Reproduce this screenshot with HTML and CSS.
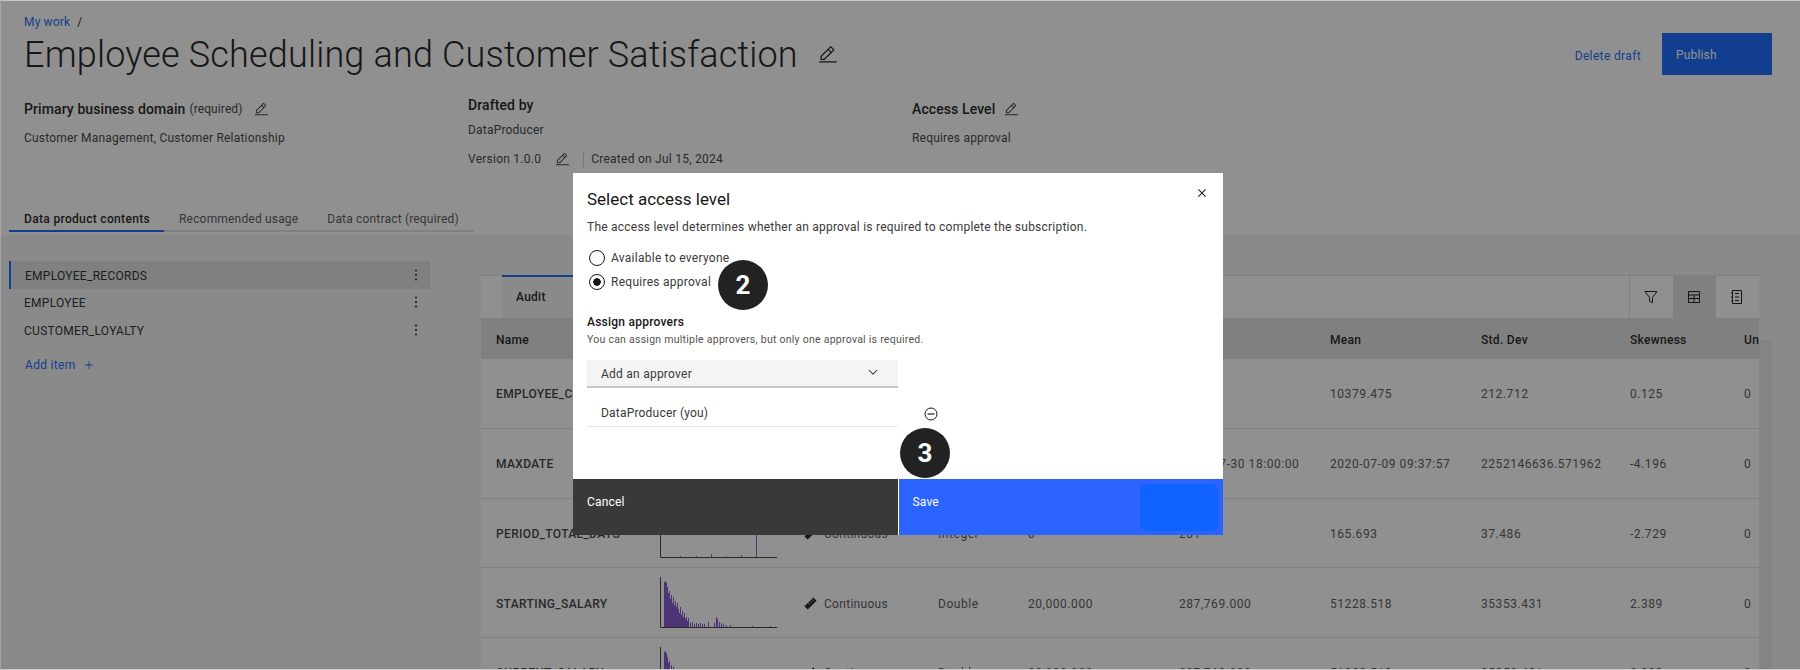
FILE: index.html
```html
<!DOCTYPE html>
<html lang="en">
<head>
    <meta charset="UTF-8">
    <meta name="viewport" content="width=device-width, initial-scale=1.0">
    <title>Employee Scheduling and Customer Satisfaction</title>
    <link rel="stylesheet" href="styles.css">
</head>
<body>
    <svg class="defs" width="0" height="0">
        <symbol id="i-edit" viewBox="0 0 32 32"><path d="M2 26h28v2H2zM25.4 9c.8-.8.8-2 0-2.8l-3.6-3.6c-.8-.8-2-.8-2.8 0l-15 15V24h6.4l15-15zm-5-5L24 7.6l-3 3L17.4 7l3-3zM6 22v-3.6l10-10 3.6 3.6-10 10H6z"/></symbol>
        <symbol id="i-more" viewBox="0 0 16 16"><circle cx="8" cy="3.5" r="1"/><circle cx="8" cy="8" r="1"/><circle cx="8" cy="12.5" r="1"/></symbol>
        <symbol id="i-ruler" viewBox="0 0 14 14"><path d="M.5 10 10 .5 13.5 4 4 13.5z"/><path d="M4.5 6.5l1.5 1.5M6.5 4.5 8 6M8.5 2.5 10 4" stroke="#fff" stroke-width="1"/></symbol>
        <symbol id="i-bars" viewBox="0 0 117 51"><path d="M4.5 50V5M5.5 50V4M6.5 50V6M7.5 50V10M8.5 50V16M9.5 50V14M10.5 50V22M11.5 50V18M12.5 50V26M13.5 50V20M14.5 50V28M15.5 50V24M16.5 50V30M17.5 50V26M18.5 50V32M19.5 50V36M20.5 50V30M21.5 50V38M22.5 50V34M23.5 50V40M24.5 50V36M25.5 50V42M26.5 50V40M27.5 50V44M28.5 50V41M30.5 50V46M32.5 50V45M34.5 50V47M36.5 50V46M38.5 50V47M40.5 50V46M42.5 50V47M44.5 50V47M48.5 50V45M54.5 50V46M56.5 50V40M57.5 50V42M59.5 50V45M61.5 50V46M63.5 50V47M66.5 50V48M70.5 50V48M92.5 50V49M110.5 50V49"/></symbol>
    </svg>

    <div class="page">
        <header class="head">
            <div class="crumb"><a class="link">My work</a><span class="crumb-sep">/</span></div>
            <div class="title-row">
                <div class="title-wrap">
                    <h1 class="title">Employee Scheduling and Customer Satisfaction</h1>
                    <svg class="ico-title"><use href="#i-edit"/></svg>
                </div>
                <div class="actions">
                    <a class="link delete">Delete draft</a>
                    <button class="publish">Publish</button>
                </div>
            </div>
            <div class="meta">
                <div class="meta-col meta-first">
                    <div class="meta-head"><b>Primary business domain</b><span class="req">(required)</span><svg class="ico-edit"><use href="#i-edit"/></svg></div>
                    <p class="meta-val">Customer Management, Customer Relationship</p>
                </div>
                <div class="meta-col meta-mid">
                    <div class="meta-head"><b>Drafted by</b></div>
                    <p class="meta-val drafted">DataProducer</p>
                    <div class="version">
                        <span>Version 1.0.0</span>
                        <svg class="ico-edit"><use href="#i-edit"/></svg>
                        <span class="version-sep"></span>
                        <span>Created on Jul 15, 2024</span>
                    </div>
                </div>
                <div class="meta-col meta-first">
                    <div class="meta-head"><b>Access Level</b><svg class="ico-edit ico-tight"><use href="#i-edit"/></svg></div>
                    <p class="meta-val">Requires approval</p>
                </div>
            </div>
            <nav class="tabs">
                <a class="tab tab-on">Data product contents</a>
                <a class="tab">Recommended usage</a>
                <a class="tab">Data contract (required)</a>
            </nav>
        </header>

        <main class="work">
            <aside class="side">
                <div class="side-item side-on"><span>EMPLOYEE_RECORDS</span><svg class="ico-more"><use href="#i-more"/></svg></div>
                <div class="side-item"><span>EMPLOYEE</span><svg class="ico-more"><use href="#i-more"/></svg></div>
                <div class="side-item"><span>CUSTOMER_LOYALTY</span><svg class="ico-more"><use href="#i-more"/></svg></div>
                <a class="link add-item">Add item <svg class="ico-plus" viewBox="0 0 32 32"><path d="M17 15V7h-2v8H7v2h8v8h2v-8h8v-2h-8z"/></svg></a>
            </aside>

            <section class="panel">
                <div class="toolbar">
                    <div class="audit-tab">Audit</div>
                    <div class="tool tool-first">
                        <svg viewBox="0 0 16 16" class="ico-tool"><path d="M2 2.5h12L9.5 8.5v5l-3-1v-4z" fill="none" stroke="#161616"/></svg>
                    </div>
                    <div class="tool tool-on">
                        <svg viewBox="0 0 16 16" class="ico-tool"><path d="M2.5 2.5h11v11h-11zM2.5 6h11M2.5 9.5h11M8 6v7.5" fill="none" stroke="#161616"/></svg>
                    </div>
                    <div class="tool tool-last">
                        <svg viewBox="0 0 16 16" class="ico-tool"><path d="M3.5 1.5h9v13h-9zM6 4.5h4M6 8h4M6 11.5h4M2 4h2M2 8h2M2 12h2" fill="none" stroke="#161616"/></svg>
                    </div>
                </div>
                <div class="grid-row grid-head">
                    <div>Name</div><div></div><div></div><div></div><div></div><div></div>
                    <div>Mean</div><div>Std. Dev</div><div>Skewness</div><div>Unique</div>
                </div>
                <div class="grid-row">
                    <div class="name">EMPLOYEE_CODE</div><div></div><div></div><div></div><div></div><div></div>
                    <div>10379.475</div><div>212.712</div><div>0.125</div><div>0</div>
                </div>
                <div class="grid-row">
                    <div class="name">MAXDATE</div><div></div><div></div><div></div><div></div>
                    <div>2020-07-30 18:00:00</div>
                    <div>2020-07-09 09:37:57</div><div>2252146636.571962</div><div>-4.196</div><div>0</div>
                </div>
                <div class="grid-row">
                    <div class="name">PERIOD_TOTAL_DAYS</div>
                    <div class="chart-cell">
                        <svg class="chart" viewBox="0 0 117 51"><path class="axis" d="M.5 0v50.5H117"/><path class="bars" d="M20.5 50v-1M36.5 50v-1M51.5 50v-3M66.5 50v-1M81.5 50v-2M96.5 50V0"/></svg>
                    </div>
                    <div class="measure"><svg class="ico-ruler"><use href="#i-ruler"/></svg>Continuous</div>
                    <div>Integer</div><div>0</div><div>201</div>
                    <div>165.693</div><div>37.486</div><div>-2.729</div><div>0</div>
                </div>
                <div class="grid-row">
                    <div class="name">STARTING_SALARY</div>
                    <div class="chart-cell">
                        <svg class="chart" viewBox="0 0 117 51"><path class="axis" d="M.5 0v50.5H117"/><use class="bars" href="#i-bars"/></svg>
                    </div>
                    <div class="measure"><svg class="ico-ruler"><use href="#i-ruler"/></svg>Continuous</div>
                    <div>Double</div><div>20,000.000</div><div>287,769.000</div>
                    <div>51228.518</div><div>35353.431</div><div>2.389</div><div>0</div>
                </div>
                <div class="grid-row">
                    <div class="name">CURRENT_SALARY</div>
                    <div class="chart-cell">
                        <svg class="chart" viewBox="0 0 117 51"><path class="axis" d="M.5 0v50.5H117"/><use class="bars" href="#i-bars"/></svg>
                    </div>
                    <div class="measure"><svg class="ico-ruler"><use href="#i-ruler"/></svg>Continuous</div>
                    <div>Double</div><div>20,000.000</div><div>287,769.000</div>
                    <div>51228.518</div><div>35353.431</div><div>2.389</div><div>0</div>
                </div>
            </section>
            <div class="track"></div>
        </main>
    </div>

    <div class="dim"></div>

    <div class="modal">
        <div class="modal-body">
            <div class="modal-top">
                <h2 class="modal-title">Select access level</h2>
                <svg class="ico-close" viewBox="0 0 32 32"><path d="M24 9.4 22.6 8 16 14.6 9.4 8 8 9.4 14.6 16 8 22.6 9.4 24 16 17.4 22.6 24 24 22.6 17.4 16 24 9.4z"/></svg>
            </div>
            <p class="modal-desc">The access level determines whether an approval is required to complete the subscription.</p>
            <div class="radios">
                <label class="radio"><span class="radio-dot"></span>Available to everyone</label>
                <label class="radio"><span class="radio-dot radio-on"></span>Requires approval</label>
            </div>
            <h3 class="assign">Assign approvers</h3>
            <p class="assign-note">You can assign multiple approvers, but only one approval is required.</p>
            <div class="select">
                <span>Add an approver</span>
                <svg class="ico-chevron" viewBox="0 0 32 32"><path d="M16 22 6 12l1.4-1.4 8.6 8.6 8.6-8.6L26 12z"/></svg>
            </div>
            <div class="approver">
                <span class="approver-name">DataProducer (you)</span>
                <svg class="ico-minus" viewBox="0 0 16 16"><circle cx="8" cy="8" r="6" fill="none" stroke="#161616"/><path d="M4.5 8h7" stroke="#161616" stroke-width="1.2"/></svg>
            </div>
        </div>
        <div class="modal-foot">
            <button class="btn btn-cancel"><span class="btn-label">Cancel</span></button>
            <button class="btn btn-save"><span class="btn-label">Save</span><span class="save-box"></span></button>
        </div>
        <span class="step step-2">2</span>
        <span class="step step-3">3</span>
    </div>
</body>
</html>
```

FILE: styles.css
```css
html, body {
    margin: 0;
    padding: 0;
    height: 670px;
    overflow: hidden;
}
body {
    font-family: Roboto, "Liberation Sans", sans-serif;
    font-size: 12px;
    color: #161616;
    background-color: #fff;
    position: relative;
}
.defs {
    position: absolute;
}
svg {
    display: block;
    fill: #161616;
}
p, h1, h2, h3 {
    margin: 0;
}
.link {
    color: #0f62fe;
}

/* header */
.head {
    height: 235px;
    box-sizing: border-box;
    padding: 14px 0 0 24px;
}
.crumb {
    display: flex;
    gap: 7px;
    line-height: 16px;
    letter-spacing: 0.16px;
}
.title-row {
    display: flex;
    justify-content: space-between;
    align-items: center;
    height: 42px;
    margin-top: 3px;
    padding-right: 28px;
}
.title-wrap {
    display: flex;
    align-items: center;
    gap: 20px;
    padding-top: 2px;
}
.title {
    font-size: 36px;
    font-weight: 300;
    line-height: 42px;
    letter-spacing: 0.17px;
    white-space: nowrap;
}
.ico-title {
    width: 20px;
    height: 20px;
}
.actions {
    display: flex;
    align-items: center;
    gap: 21px;
}
.publish {
    width: 110px;
    height: 42px;
    padding: 2px 0 0 14px;
    border: none;
    text-align: left;
    font: inherit;
    letter-spacing: 0.16px;
    color: #fff;
    background-color: #0f62fe;
}
.delete {
    padding-top: 3px;
    letter-spacing: 0.36px;
}

.meta {
    display: grid;
    grid-template-columns: 444px 444px 1fr;
    margin-top: 21px;
    height: 69px;
}
.meta-head {
    display: flex;
    align-items: center;
    gap: 4px;
    height: 16px;
    font-size: 14px;
    letter-spacing: 0.1px;
}
.meta-head b {
    font-weight: 500;
}
.meta-first .meta-head {
    margin-top: 5px;
}
.meta-mid {
    padding-top: 1px;
}
.req {
    font-size: 12px;
    letter-spacing: 0.1px;
    color: #393939;
}
.ico-edit {
    width: 15px;
    height: 15px;
    margin-left: 7px;
    fill: #393939;
}
.ico-tight {
    margin-left: 5px;
}
.meta-val {
    margin-top: 13px;
    line-height: 16px;
    letter-spacing: 0.2px;
    color: #393939;
}
.meta-val.drafted {
    margin-top: 9px;
}
.version {
    display: flex;
    align-items: center;
    height: 16px;
    margin-top: 13px;
    letter-spacing: 0.25px;
    color: #393939;
}
.version .ico-edit {
    margin: 0 13px 0 14px;
}
.version-sep {
    width: 1px;
    height: 16px;
    margin-right: 7px;
    background-color: #d0d0d0;
}

.tabs {
    display: flex;
    width: 465px;
    height: 28px;
    margin: 39px 0 0 -15px;
    box-sizing: border-box;
    border-bottom: 2px solid #e0e0e0;
}
.tab {
    line-height: 30px;
    padding: 0 14px 0 15px;
    color: #525252;
    letter-spacing: 0.18px;
    white-space: nowrap;
}
.tab-on {
    font-weight: 500;
    color: #161616;
    height: 28px;
    box-sizing: border-box;
    letter-spacing: 0.33px;
    border-bottom: 2px solid #0f62fe;
}

/* lower part */
.work {
    display: flex;
    height: 435px;
    padding-left: 9px;
    background-color: #f4f4f4;
}
.side {
    width: 421px;
    flex-shrink: 0;
    padding-top: 26px;
}
.side-item {
    display: flex;
    justify-content: space-between;
    align-items: center;
    height: 27.5px;
    padding: 0 6px 0 15px;
    color: #262626;
    letter-spacing: 0.27px;
}
.side-item span {
    padding-top: 2px;
}
.side-on {
    background-color: #e0e0e0;
    border-left: 2px solid #0f62fe;
    padding-left: 14px;
}
.ico-more {
    width: 16px;
    height: 16px;
}
.add-item {
    display: flex;
    align-items: center;
    gap: 7px;
    margin: 14px 0 0 16px;
    letter-spacing: 0.3px;
}
.ico-plus {
    width: 14px;
    height: 14px;
    fill: #0f62fe;
}

.panel {
    width: 1278px;
    margin: 40px 0 0 51px;
    flex-shrink: 0;
    overflow: hidden;
    background-color: #fff;
}
.toolbar {
    display: flex;
    height: 43px;
    box-sizing: border-box;
    padding-left: 21px;
    border-top: 1px solid #e0e0e0;
}
.audit-tab {
    width: 100px;
    padding-left: 14px;
    margin-right: auto;
    line-height: 40px;
    font-weight: 500;
    color: #161616;
    background-color: #f4f4f4;
    border-top: 2px solid #0f62fe;
    margin-top: -1px;
    letter-spacing: 0.26px;
}
.tool {
    display: flex;
    justify-content: center;
    align-items: center;
    width: 43px;
    margin-top: -1px;
}
.tool-first {
    border-left: 1px solid #e0e0e0;
}
.tool-on {
    background-color: #e0e0e0;
}
.ico-tool {
    width: 16px;
    height: 16px;
    margin-left: -2px;
}

.grid-row {
    display: grid;
    grid-template-columns: 164px 150px 128px 90px 151px 151px 151px 149px 114px 150px;
    align-items: center;
    height: 69.75px;
    box-sizing: border-box;
    border-bottom: 1px solid #e0e0e0;
    color: #525252;
    letter-spacing: 0.55px;
    white-space: nowrap;
}
.grid-row > div {
    padding: 2px 0 0 15px;
}
.grid-row > .chart-cell {
    padding-top: 0;
}
.grid-row > .measure {
    padding-left: 9px;
}
.grid-head {
    height: 41px;
    background-color: #e0e0e0;
    border-bottom: none;
    font-weight: 500;
    letter-spacing: 0.3px;
    color: #161616;
}
.name {
    font-weight: 500;
    letter-spacing: 0.35px;
    color: #393939;
}
.measure {
    display: flex;
    align-items: center;
    gap: 7px;
    letter-spacing: 0.3px;
}
.ico-ruler {
    width: 13px;
    height: 13px;
}
.chart {
    width: 117px;
    height: 51px;
    overflow: hidden;
}
.axis {
    fill: none;
    stroke: #393939;
}
.bars {
    fill: none;
    stroke: #7d4fd0;
}
.track {
    width: 13px;
    margin-top: 105px;
    background-color: #e8e8e8;
}

/* dim layer and dialog */
.dim {
    position: absolute;
    inset: 0;
    box-sizing: border-box;
    border-top: 1px solid #c8c8c8;
    border-bottom: 1px solid #c8c8c8;
    border-left: 1px solid #a6a6a6;
    background-clip: padding-box;
    background-color: rgba(22, 22, 22, 0.48);
}
.modal {
    position: absolute;
    left: 573px;
    top: 173px;
    width: 650px;
    height: 362px;
    display: flex;
    flex-direction: column;
    background-color: #fff;
}
.modal-body {
    flex: 1;
    padding: 13px 14px 0;
}
.modal-top {
    display: flex;
    justify-content: space-between;
}
.modal-title {
    font-size: 17px;
    font-weight: 400;
    line-height: 26px;
}
.ico-close {
    width: 16px;
    height: 16px;
    margin: -1px -1px 0 0;
}
.modal-desc {
    margin-top: 7px;
    line-height: 16px;
    letter-spacing: 0.23px;
    color: #393939;
}
.radios {
    display: flex;
    flex-direction: column;
    gap: 7px;
    margin: 14px 0 0 2px;
}
.radio {
    display: flex;
    align-items: center;
    gap: 6px;
    height: 17px;
    color: #393939;
    letter-spacing: 0.27px;
}
.radio-dot {
    width: 16px;
    height: 16px;
    box-sizing: border-box;
    border: 1px solid #161616;
    border-radius: 50%;
}
.radio-on {
    background: radial-gradient(circle, #161616 0 3.5px, transparent 4px);
}
.assign {
    margin-top: 24px;
    font-size: 12px;
    font-weight: 500;
    line-height: 16px;
    letter-spacing: 0.24px;
}
.assign-note {
    margin-top: 3px;
    font-size: 10.5px;
    line-height: 14px;
    letter-spacing: 0.26px;
    color: #525252;
}
.select {
    display: flex;
    justify-content: space-between;
    align-items: center;
    width: 311px;
    height: 28px;
    margin-top: 13px;
    padding: 1px 18px 0 14px;
    box-sizing: border-box;
    background-color: #f4f4f4;
    border-bottom: 2px solid #c6c6c6;
    color: #393939;
    letter-spacing: 0.24px;
}
.ico-chevron {
    width: 14px;
    height: 14px;
    margin-top: -4px;
}
.approver {
    display: flex;
    align-items: center;
    margin-top: 12px;
}
.approver-name {
    width: 311px;
    height: 27px;
    box-sizing: border-box;
    padding-left: 14px;
    line-height: 26px;
    border-bottom: 1px solid #e8e8e8;
    color: #393939;
    letter-spacing: 0.2px;
}
.ico-minus {
    width: 16px;
    height: 16px;
    margin-left: 25px;
}
.modal-foot {
    display: flex;
    gap: 1px;
    height: 56px;
}
.btn {
    flex: 1;
    display: flex;
    justify-content: space-between;
    align-items: center;
    border: none;
    font: inherit;
    letter-spacing: 0.16px;
    color: #fff;
    padding: 0 5px 0 14px;
    margin: 0;
}
.btn-label {
    margin-bottom: 11px;
}
.btn-cancel {
    background-color: #393939;
}
.btn-save {
    background-color: #2b63ff;
}
.save-box {
    width: 78px;
    height: 47px;
    border-radius: 7px;
    background-color: #0f62fe;
}
.step {
    position: absolute;
    width: 50px;
    height: 50px;
    border-radius: 50%;
    background-color: #222;
    color: #fff;
    font-size: 26px;
    font-weight: 700;
    line-height: 50px;
    text-align: center;
}
.step-2 {
    left: 145px;
    top: 87px;
}
.step-3 {
    left: 327px;
    top: 255px;
}
```
